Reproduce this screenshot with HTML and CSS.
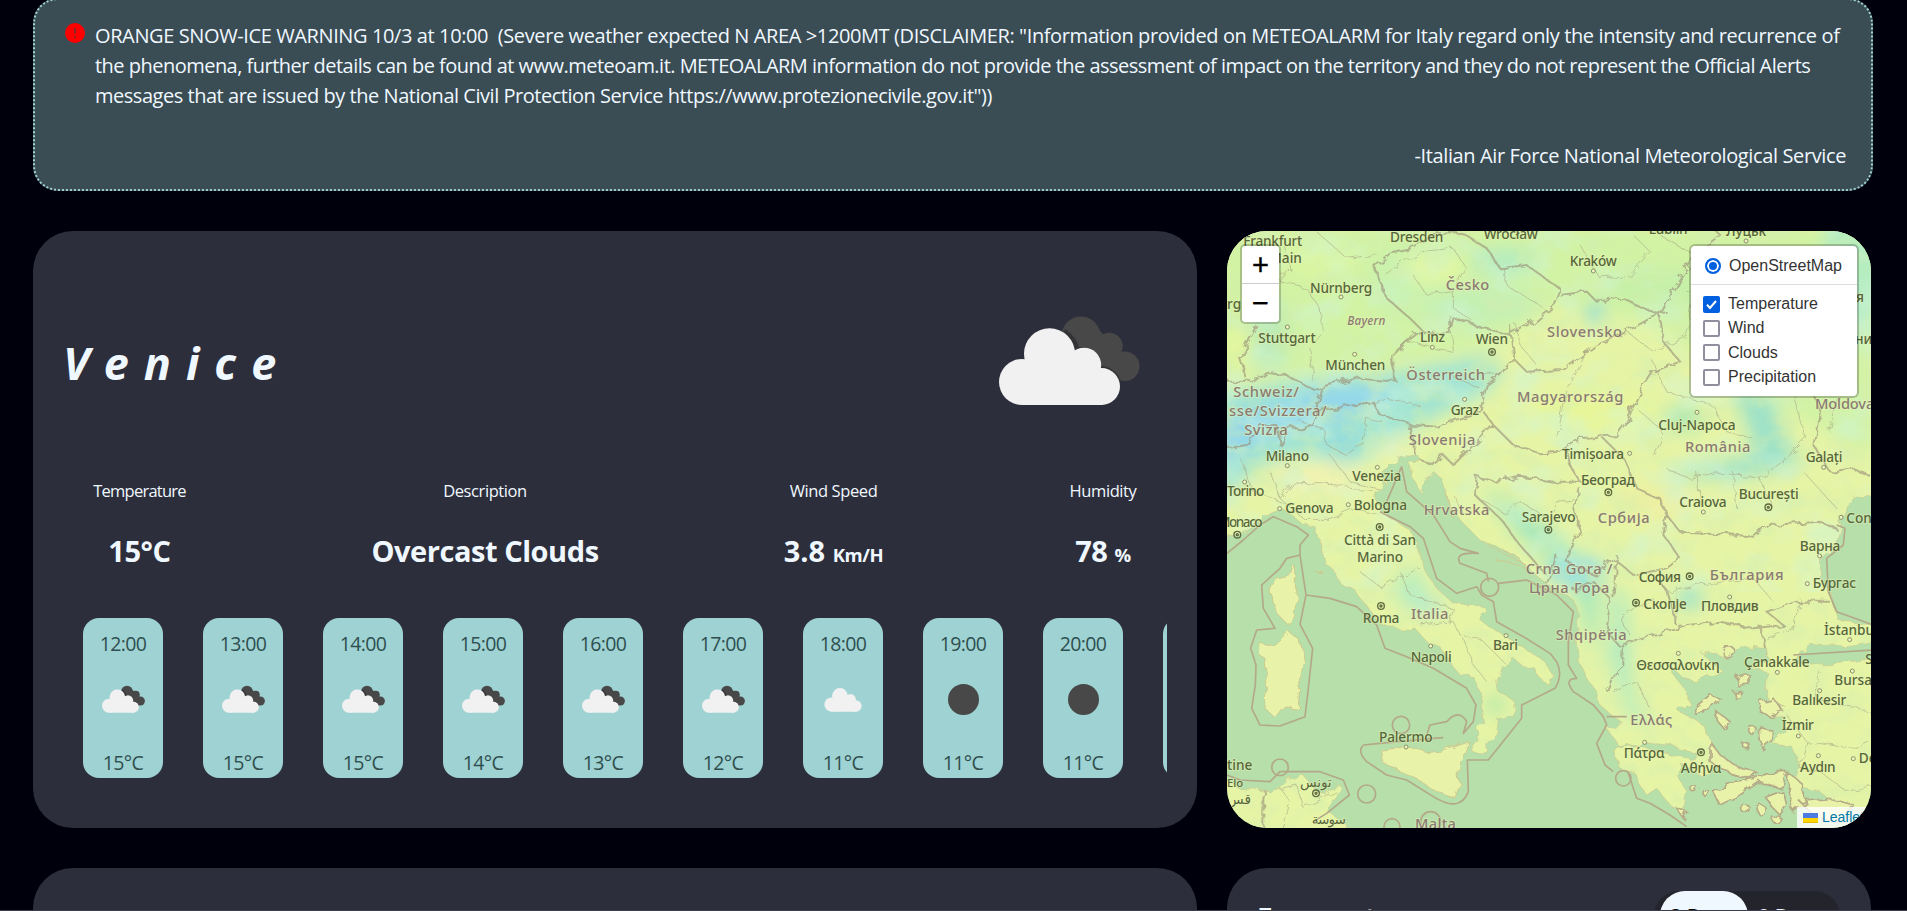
FILE: index.html
```html
<!DOCTYPE html>
<html lang="en">
<head>
<meta charset="utf-8">
<title>Weather</title>
<link rel="stylesheet" href="styles.css">
</head>
<body>
<svg class="defs" width="0" height="0" aria-hidden="true">
  <symbol id="cloud" viewBox="0 0 121 78">
    <circle cx="23" cy="54" r="23"/><circle cx="50.500" cy="25.800" r="25.500"/><circle cx="85" cy="37" r="17.200"/><circle cx="102.500" cy="58.500" r="18.500"/><path d="M23 38H50L98 40L104 60V77H23Z"/>
  </symbol>
  <symbol id="clouds" viewBox="0 0 145 95">
    <g fill="#484848"><circle cx="84" cy="22" r="19.500"/><circle cx="112.500" cy="32" r="13.200"/><circle cx="127.700" cy="52.300" r="14.800"/><path d="M80 38L102 16L124 38L128 60L118 66Z"/></g>
    <path d="M67 17Q79 26 80 36Q96 33 103 54Q117 56 121 67" fill="none" stroke="#333336" stroke-width="5"/>
    <use href="#cloud" x="2" y="14" width="121" height="78" fill="#f1f1f2"/>
  </symbol>
</svg>
<main class="page">
  <section class="alert">
    <svg class="alert-icon" viewBox="0 0 20 20"><circle cx="10" cy="10" r="10" fill="#f00"/><path d="M10 5v5.500M10 12.700v2" stroke="#7a2a2c" stroke-width="1.800"/></svg>
    <p class="alert-text"><span class="l1">ORANGE SNOW-ICE WARNING 10/3 at 10:00 &nbsp;(Severe weather expected N AREA &gt;1200MT (DISCLAIMER: "Information provided on METEOALARM for Italy regard only the intensity and recurrence of</span><span class="l2">the phenomena, further details can be found at www.meteoam.it. METEOALARM information do not provide the assessment of impact on the territory and they do not represent the Official Alerts</span><span class="l3">messages that are issued by the National Civil Protection Service https://www.protezionecivile.gov.it"))</span></p>
    <p class="alert-source">-Italian Air Force National Meteorological Service</p>
  </section>

  <section class="card weather">
    <div class="head"><h1 class="city">Venice</h1><svg class="big-icon"><use href="#clouds"/></svg></div>
    <div class="stats">
      <div class="stat s1"><span class="label">Temperature</span><b class="value">15°C</b></div>
      <div class="stat s2"><span class="label">Description</span><b class="value">Overcast Clouds</b></div>
      <div class="stat s3"><span class="label">Wind Speed</span><b class="value">3.8 <small>Km/H</small></b></div>
      <div class="stat s4"><span class="label">Humidity</span><b class="value">78 <small>%</small></b></div>
    </div>
    <div class="hours">
      <div class="hour"><span>12:00</span><svg class="ic"><use href="#clouds"/></svg><span>15°C</span></div>
      <div class="hour"><span>13:00</span><svg class="ic"><use href="#clouds"/></svg><span>15°C</span></div>
      <div class="hour"><span>14:00</span><svg class="ic"><use href="#clouds"/></svg><span>15°C</span></div>
      <div class="hour"><span>15:00</span><svg class="ic"><use href="#clouds"/></svg><span>14°C</span></div>
      <div class="hour"><span>16:00</span><svg class="ic"><use href="#clouds"/></svg><span>13°C</span></div>
      <div class="hour"><span>17:00</span><svg class="ic"><use href="#clouds"/></svg><span>12°C</span></div>
      <div class="hour"><span>18:00</span><svg class="ic one"><use href="#cloud"/></svg><span>11°C</span></div>
      <div class="hour"><span>19:00</span><svg class="ic"><circle cx="22.500" cy="14.500" r="15.500" fill="#484848"/></svg><span>11°C</span></div>
      <div class="hour"><span>20:00</span><svg class="ic"><circle cx="22.500" cy="14.500" r="15.500" fill="#484848"/></svg><span>11°C</span></div>
      <div class="hour"></div>
    </div>
  </section>

  <section class="map">
    <svg class="tiles" viewBox="21 18 1932 1791">
      <defs>
        <filter id="soft" x="-50%" y="-50%" width="200%" height="200%"><feGaussianBlur stdDeviation="26"/></filter>
        <filter id="grain" x="0" y="0" width="100%" height="100%"><feTurbulence type="fractalNoise" baseFrequency="0.012 0.015" numOctaves="4" seed="8"/><feColorMatrix values="0 0 0 0 0.66  0 0 0 0 0.86  0 0 0 0 0.42  3.2 0 0 0 -1.450"/></filter>
        <filter id="grain2" x="0" y="0" width="100%" height="100%"><feTurbulence type="fractalNoise" baseFrequency="0.007 0.009" numOctaves="3" seed="21"/><feColorMatrix values="0 0 0 0 0.62  0 0 0 0 0.92  0 0 0 0 0.76  0 3.2 0 0 -1.500"/></filter>
        <filter id="rough" x="0" y="0" width="100%" height="100%"><feTurbulence type="fractalNoise" baseFrequency="0.03" numOctaves="3" seed="3"/><feDisplacementMap in="SourceGraphic" scale="26"/></filter>
      </defs>
      <rect width="1980" height="1830" fill="#e6f4a6"/>
      <g filter="url(#soft)">
        <path d="M0 0H1960V700L1700 560L1300 300L1000 240L820 360L500 420L0 460Z" fill="#d2f3a4"/>
        <ellipse cx="760" cy="240" rx="200" ry="60" fill="#c4f0b4"/>
        <ellipse cx="560" cy="170" rx="110" ry="110" fill="#c9f2ae"/>
        <ellipse cx="850" cy="110" rx="100" ry="40" fill="#b4ecc0"/>
        <ellipse cx="640" cy="130" rx="90" ry="50" fill="#e2f7a2"/>
        <ellipse cx="300" cy="100" rx="120" ry="55" fill="#dcf6a0"/>
        <ellipse cx="60" cy="370" rx="40" ry="80" fill="#e4f79c"/>
        <ellipse cx="1900" cy="120" rx="90" ry="230" fill="#b4edc0"/>
        <ellipse cx="1330" cy="190" rx="170" ry="60" fill="#c6f0a8"/>
        <path d="M0 500L250 460L520 440L800 390L850 440L800 500L640 580L500 650L400 720L250 690L120 720L0 830Z" fill="#a2e4d2"/>
        <path d="M0 580L330 480L520 480L480 550L330 590L200 620L100 660L0 730Z" fill="#94d8ea"/>
        <path d="M300 640L400 600L420 660L360 700Z" fill="#94dcdc"/>
        <ellipse cx="150" cy="330" rx="60" ry="110" fill="#bdebb4"/>
        <path d="M1530 500L1650 510L1700 640L1740 720L1560 760L1350 755L1350 740L1600 690L1580 600Z" fill="#9fe2c8"/>
        <ellipse cx="1390" cy="580" rx="60" ry="40" fill="#b2e9b4"/>
        <ellipse cx="1125" cy="265" rx="25" ry="30" fill="#7cd8dc"/>
        <path d="M780 780L960 880L1080 1000L1140 1080L1120 1300L1060 1080L900 940Z" fill="#a9e8bc"/>
        <ellipse cx="1070" cy="1040" rx="90" ry="50" fill="#9ee2dc"/>
        <ellipse cx="1410" cy="1120" rx="40" ry="30" fill="#98e2d0"/>
        <path d="M1170 1100L1220 1100L1240 1400L1290 1500L1230 1480L1160 1300Z" fill="#b6ecc0"/>
        <ellipse cx="570" cy="1090" rx="50" ry="60" fill="#bceebe"/>
        <ellipse cx="625" cy="1145" rx="45" ry="28" fill="#b0ead4"/>
        <ellipse cx="825" cy="1440" rx="25" ry="30" fill="#a9e6ac"/>
        <ellipse cx="1300" cy="830" rx="120" ry="50" fill="#eff0a0"/>
        <ellipse cx="1120" cy="560" rx="200" ry="60" fill="#e8f69a"/>
        <ellipse cx="520" cy="670" rx="50" ry="25" fill="#f0f4b0"/>
        <ellipse cx="300" cy="760" rx="160" ry="50" fill="#f0f3b0"/>
      </g>
      <rect width="1980" height="1830" filter="url(#grain)" opacity=".48"/>
      <rect width="1980" height="1100" filter="url(#grain2)" opacity=".4"/>

      <g class="minor" filter="url(#rough)">
        <path d="M190 60L210 130L180 170L260 190L300 250L310 320L270 370L280 470M290 20L380 100L470 90M210 130L170 160M580 150L620 210L700 200L740 130L700 70L600 80L500 150M700 200L700 250L760 290M850 130L860 180L940 230L970 250M510 390L560 350L700 380L690 270M460 540L500 520L600 540M690 450L780 490M240 590L310 610L320 660L380 690L430 650L440 580L490 590M330 690L390 770L480 790M150 740L180 820L220 770L350 780L460 800M180 820L250 880L330 880L400 850L480 870M780 440L840 450M890 300L900 360L950 420M200 840L100 800L60 700"/>
        <path d="M1080 60L1140 160L1230 150L1290 80L1240 30M1320 30L1440 100L1470 180L1400 200M1420 220L1400 330L1300 380L1220 320M1110 360L1040 500L1010 640M1290 400L1340 500L1400 520L1480 540L1520 620L1600 640M1300 690L1330 620L1250 550M1340 730L1410 760L1480 740L1620 760L1700 700L1760 640M1430 740L1440 840M1540 740L1550 850M1620 760L1660 850M1760 640L1720 520L1760 450M1880 400L1830 620M1750 740L1850 850M1060 820L1010 830L980 880L900 830L860 870L780 820"/>
        <path d="M420 1040L480 1085L530 1060L600 1030M540 1040L570 1110L640 1130L700 1150M600 1200L700 1190L720 1230L780 1240L850 1310M730 1240L760 1320L800 1370M700 1150L690 1200M130 1700L230 1680L250 1750L350 1700M150 1650L210 1730L190 1810M1300 1060L1350 1100L1440 1080L1600 1060L1660 1130M1370 1080L1370 1200M1640 1240L1720 1210L1740 1120M1230 1230L1200 1180L1300 1120M1800 1340L1780 1420L1850 1440L1960 1460M1700 1470L1760 1550L1900 1570L1960 1540M1760 1550L1740 1630L1800 1640L1880 1700L1960 1680M1180 1400L1250 1370L1290 1450"/>
      </g>

      <g class="border" filter="url(#rough)">
        <path d="M720 20L800 70L840 130L920 120L960 150L1020 190L1000 240L940 290L870 330L760 300L700 280L690 320L620 330L570 280L500 220L480 170L460 120L520 80L570 70L640 30L720 20M870 300L880 400L920 440L1030 435L1130 360L1200 330L1290 280L1340 260M600 320L560 350L510 400L530 470L400 460L310 480L290 500L200 450L140 440L100 470L20 470M310 480L290 560L350 550L460 530L480 570L580 600L650 605L720 580L780 560L800 480L840 450L880 400M20 670L80 660L120 600L170 600L180 660L210 600L260 620L280 590L290 550M570 600L590 700L640 720L670 690L700 720L760 660L820 600L790 560M820 600L880 660L960 685L1020 680L1080 640L1190 630L1220 590L1260 500L1300 440L1380 410L1330 350L1320 270L1210 220L1130 230L1100 200L1020 210M1320 270L1380 160L1420 100M1040 670L1050 720L1080 770L1000 770L900 755L830 770L770 755L765 810L840 880L900 960L970 1040M1080 790L1060 850L1080 920L1050 960L1040 1010L1130 1050L1180 1000L1240 1050L1340 1030L1380 1000L1330 930L1340 870L1320 820L1250 790L1210 700L1150 640M1340 870L1380 920L1500 925L1600 935L1650 900L1800 890L1850 910M1410 100L1500 30L1480 10M1830 740L1780 660L1800 560L1760 450L1780 380M1830 740L1900 730L1950 750M80 460L60 400L110 300"/>
        <path d="M980 1080L1010 990M1060 1100L1120 1070L1170 1120L1160 1220L1200 1265L1330 1220L1400 1200L1500 1190L1600 1210L1690 1200L1640 1160L1730 1130L1830 1130M1210 1260L1210 1320L1180 1350L1160 1400M1320 1070L1340 1100L1370 1200M1180 1120L1190 990M1620 1200L1640 1290M130 1810L130 1720L150 1660"/>
      </g>

      <g class="sea" filter="url(#rough)">
        <path d="M0 940L60 925L110 895L150 862L180 850L215 870L245 895L285 905L300 950L320 1020L335 1030L365 1080L400 1090L430 1130L480 1195L540 1215L590 1215L620 1250L660 1265L695 1320L720 1350L760 1355L775 1390L785 1430L792 1490L775 1505L770 1545L752 1570L760 1583L790 1583L805 1550L830 1525L835 1485L880 1475L878 1425L835 1400L830 1370L850 1320L880 1300L910 1325L945 1330L960 1360L985 1378L995 1345L975 1310L930 1280L858 1235L800 1200L775 1180L800 1160L790 1142L740 1142L700 1135L650 1090L610 1030L600 980L575 920L530 890L480 860L465 800L500 770L480 745L530 705L560 690L595 690L600 708L570 715L570 750L605 805L620 770L640 740L665 760L690 840L720 885L780 945L880 985L930 1035L990 1085L1060 1125L1080 1175L1070 1225L1075 1310L1100 1360L1130 1400L1140 1440L1180 1475L1210 1495L1160 1510L1190 1550L1200 1570L1280 1550L1390 1570L1440 1590L1410 1600L1290 1575L1240 1555L1180 1570L1200 1630L1240 1640L1260 1680L1280 1710L1310 1690L1350 1740L1390 1760L1400 1700L1370 1650L1390 1620L1440 1650L1480 1650L1490 1590L1450 1500L1370 1455L1410 1440L1400 1400L1360 1350L1350 1320L1390 1360L1430 1370L1480 1350L1510 1340L1450 1290L1460 1275L1520 1300L1560 1265L1640 1270L1640 1300L1590 1330L1640 1340L1640 1420L1690 1440L1620 1430L1640 1470L1700 1480L1690 1520L1650 1550L1720 1570L1740 1620L1720 1680L1800 1700L1850 1740L1960 1760V1840H380L380 1800L320 1755L370 1690L350 1675L320 1710L290 1700L250 1650L200 1665L150 1700L60 1690L0 1650Z"/>
        <path d="M1980 815L1900 815L1876 840L1862 900L1850 960L1802 1000L1801 1055L1830 1100L1836 1130L1850 1180L1900 1195L1980 1200Z"/>
        <path d="M1720 1310L1770 1255L1860 1265L1960 1250V1300L1860 1315L1740 1318Z"/>
      </g>
      <g class="isle" filter="url(#rough)">
        <path d="M218 1015L228 1050L232 1130L205 1200L170 1165L150 1100L165 1060L205 1050Z"/>
        <path d="M205 1220L240 1245L252 1300L240 1370L235 1450L190 1445L165 1478L135 1450L140 1370L135 1300L118 1290L120 1255L160 1260Z"/>
        <path d="M485 1575L560 1565L620 1580L690 1570L748 1550L710 1640L720 1680L705 1718L650 1700L580 1655L490 1615Z"/>
        <path d="M285 1040H308M680 800L700 880M700 810L730 870M800 960L920 1020M820 1000L930 1030M840 970L900 1000"/>
      </g>
      <g class="isle ring" filter="url(#rough)">
        <circle cx="1525" cy="1280" r="18"/><path d="M1550 1350L1590 1350L1590 1380L1555 1385ZM1540 1400L1565 1400L1550 1425ZM1620 1430L1660 1420L1690 1460L1650 1475L1615 1455ZM1470 1410L1500 1420L1480 1445L1425 1465L1420 1450ZM1490 1460L1530 1490L1510 1510L1495 1490ZM1620 1505L1655 1515L1650 1550L1625 1570ZM1470 1550L1500 1590L1560 1630L1610 1640L1590 1660L1520 1640L1470 1610ZM1480 1700L1540 1670L1600 1660L1660 1640L1700 1640L1680 1690L1620 1670L1560 1710L1500 1740ZM1640 1720L1690 1700L1700 1740L1680 1770L1650 1740ZM1700 1640L1740 1670L1760 1730L1720 1760ZM1740 1730L1830 1720L1900 1740L1870 1790L1790 1780ZM1370 1750L1400 1760L1390 1780Z"/>
        <circle cx="1598" cy="1516" r="12"/><circle cx="1576" cy="1559" r="9"/><circle cx="1420" cy="1690" r="10"/><circle cx="1455" cy="1701" r="9"/><circle cx="1575" cy="1750" r="13"/><circle cx="1625" cy="1755" r="14"/><circle cx="1672" cy="1785" r="12"/>
      </g>
      <g class="maritime">
        <path d="M21 985L70 945L120 900L160 875L230 905L265 930L240 960L240 990L200 1000L180 1030L125 1080L130 1150L165 1210L110 1215L92 1270L108 1320L106 1380L95 1450L120 1500L180 1503L255 1475L265 1390L278 1270L240 1198L258 1110L240 990"/>
        <path d="M258 1110L330 1120L410 1145L470 1200L495 1270L560 1295L640 1330L740 1390L768 1440L760 1490L730 1525L740 1490Q720 1455 690 1480L680 1490L630 1500L620 1530M430 1560L480 1555L640 1540L670 1538M430 1560Q410 1580 440 1610L500 1650L560 1665L640 1715Q720 1765 745 1700L742 1605L805 1605L905 1480L905 1440L1005 1390Q1030 1350 1010 1310L990 1285L910 1235L830 1190L820 1130L785 1110L770 1085L710 1105L650 1060L610 940L570 905L480 860M545 725L560 800L640 870L690 950L720 970L775 985Q700 980 720 1015L800 1045L805 1070M835 1075L920 1065L1010 1110L1060 1160L1045 1250L1045 1320L1070 1360Q1030 1360 1060 1400L1120 1440L1150 1475L1160 1500L1130 1555L1155 1620L1180 1640M1225 1645L1250 1720L1290 1735L1350 1770L1400 1805M21 1650L60 1665L150 1670L180 1640L300 1640L370 1665L388 1710L320 1765L280 1790M1160 1475H1220M545 725L500 830M1850 900L1875 910L1870 960L1820 1000L1825 1100L1850 1160L1960 1200M1720 1290L1960 1275"/>
        <circle cx="543" cy="1500" r="26"/><circle cx="440" cy="1707" r="27"/><circle cx="180" cy="1627" r="25"/><circle cx="516" cy="1805" r="24"/><circle cx="632" cy="1790" r="30"/><circle cx="809" cy="1087" r="27"/><circle cx="1210" cy="1660" r="23"/>
      </g>

      <g class="dots">
        <circle cx="363" cy="216" r="6"/><circle cx="202" cy="306" r="6"/><circle cx="404" cy="388" r="6"/><circle cx="637" cy="367" r="6"/><circle cx="734" cy="523" r="6"/><circle cx="202" cy="722" r="6"/><circle cx="472" cy="727" r="6"/><circle cx="74" cy="771" r="6"/><circle cx="179" cy="851" r="6"/><circle cx="385" cy="839" r="6"/><circle cx="1120" cy="138" r="6"/><circle cx="1578" cy="48" r="6"/><circle cx="1431" cy="562" r="6"/><circle cx="1229" cy="685" r="6"/><circle cx="1450" cy="861" r="6"/><circle cx="1811" cy="727" r="6"/><circle cx="1863" cy="877" r="6"/><circle cx="632" cy="1263" r="6"/><circle cx="858" cy="1232" r="6"/><circle cx="558" cy="1566" r="6"/><circle cx="1799" cy="993" r="6"/><circle cx="1762" cy="1076" r="6"/><circle cx="1529" cy="1116" r="6"/><circle cx="1375" cy="1285" r="6"/><circle cx="1672" cy="1342" r="6"/><circle cx="1889" cy="1244" r="6"/><circle cx="1897" cy="1338" r="6"/><circle cx="1799" cy="1397" r="6"/><circle cx="1735" cy="1533" r="6"/><circle cx="1795" cy="1592" r="6"/><circle cx="1900" cy="1601" r="6"/><circle cx="1274" cy="1552" r="6"/>
      </g>
      <g class="capitals">
        <g id="cap"><circle cx="816" cy="381" r="10"/><circle cx="816" cy="381" r="3"/></g>
        <use href="#cap" x="-337" y="525"/><use href="#cap" x="169" y="533"/><use href="#cap" x="349" y="421"/><use href="#cap" x="829" y="466"/><use href="#cap" x="-764" y="548"/><use href="#cap" x="-333" y="762"/><use href="#cap" x="593" y="673"/><use href="#cap" x="432" y="752"/><use href="#cap" x="627" y="1201"/><use href="#cap" x="-528" y="1324"/>
      </g>

      <g class="cities">
        <text x="70" y="64" textLength="177">Frankfurt</text><text x="148" y="115">Main</text><text x="510" y="51" textLength="160">Dresden</text><text x="791" y="41" textLength="162">Wrocław</text>
        <text x="270" y="203" textLength="187">Nürnberg</text><text x="115" y="353" textLength="172">Stuttgart</text><text x="316" y="435" textLength="180">München</text><text x="600" y="352" textLength="75">Linz</text><text x="767" y="357" textLength="97">Wien</text><text x="692" y="570" textLength="85">Graz</text>
        <text x="137" y="707" textLength="130">Milano</text><text x="397" y="769" textLength="147">Venezia</text><text x="21" y="814" textLength="112">Torino</text><text x="196" y="865" textLength="145">Genova</text><text x="401" y="854" textLength="160">Bologna</text><text x="-6" y="906" textLength="134">Monaco</text><text x="-30" y="252">burg</text>
        <text x="905" y="892" textLength="162">Sarajevo</text><text x="1049" y="122" textLength="141">Kraków</text><text x="1286" y="26" textLength="117">Lublin</text><text x="1518" y="34" textLength="120">Луцьк</text><text x="1315" y="616" textLength="232">Cluj-Napoca</text><text x="1026" y="702" textLength="186">Timișoara</text><text x="1083" y="779" textLength="162">Београд</text><text x="1378" y="845" textLength="142">Craiova</text><text x="1556" y="823" textLength="180">București</text><text x="1757" y="710" textLength="110">Galați</text><text x="1879" y="894">Constanța</text><text x="1908" y="230">я</text><text x="1905" y="356">ниця</text>
        <text x="372" y="960" textLength="216">Città di San</text><text x="411" y="1011" textLength="138">Marino</text><text x="428" y="1195" textLength="110">Roma</text><text x="572" y="1311" textLength="123">Napoli</text><text x="819" y="1275" textLength="75">Bari</text><text x="477" y="1551" textLength="161">Palermo</text><text x="21" y="1635">tine</text><text x="21" y="1686" font-size="34">Elo</text><text x="240" y="1686" textLength="95">تونس</text><text x="275" y="1796" textLength="103">سوسة</text><text x="21" y="1738">قس</text>
        <text x="1256" y="1070" textLength="127">София</text><text x="1270" y="1151" textLength="130">Скопје</text><text x="1443" y="1159" textLength="173">Пловдив</text><text x="1739" y="977" textLength="122">Варна</text><text x="1778" y="1090" textLength="130">Бургас</text><text x="1812" y="1230">İstanbul</text><text x="1249" y="1335" textLength="250">Θεσσαλονίκη</text><text x="1572" y="1325" textLength="197">Çanakkale</text><text x="1843" y="1381">Bursa</text><text x="1936" y="1317">S</text><text x="1717" y="1440" textLength="162">Balıkesir</text><text x="1685" y="1516" textLength="96">İzmir</text><text x="1740" y="1640" textLength="107">Aydın</text><text x="1916" y="1614">Denizli</text><text x="1211" y="1599" textLength="123">Πάτρα</text><text x="1382" y="1645" textLength="122">Αθήνα</text>
      </g>
      <g class="countries">
        <text x="677" y="194" textLength="131">Česko</text><text x="382" y="299" textLength="114" font-size="35" font-style="italic">Bayern</text><text x="559" y="466" textLength="236">Österreich</text><text x="40" y="516" textLength="197">Schweiz/</text><text x="27" y="572" textLength="293">sse/Svizzera/</text><text x="73" y="629" textLength="130">Svizra</text><text x="566" y="660" textLength="200">Slovenija</text><text x="611" y="869" textLength="197">Hrvatska</text><text x="891" y="530" textLength="319">Magyarország</text><text x="981" y="337" textLength="225">Slovensko</text><text x="1785" y="553" textLength="178">Moldova</text><text x="1395" y="680" textLength="196">România</text><text x="1133" y="895" textLength="156">Србија</text>
        <text x="573" y="1181" textLength="112">Italia</text><text x="917" y="1048" textLength="260">Crna Gora /</text><text x="927" y="1104" textLength="241">Црна Гора</text><text x="1007" y="1246" textLength="213">Shqipëria</text><text x="1469" y="1065" textLength="222">България</text><text x="1231" y="1500" textLength="126">Ελλάς</text><text x="585" y="1812" textLength="123">Malta</text>
      </g>
    </svg>
    <div class="zoom"><span>+</span><span>−</span></div>
    <div class="layers">
      <div class="row base"><i class="radio"></i>OpenStreetMap</div>
      <div class="overlays">
        <div class="row"><svg class="box on" viewBox="0 0 17 17"><path d="M4 8.800l3 3.200 6-7" fill="none" stroke="#fff" stroke-width="2"/></svg>Temperature</div>
        <div class="row"><i class="box"></i>Wind</div>
        <div class="row"><i class="box"></i>Clouds</div>
        <div class="row"><i class="box"></i>Precipitation</div>
      </div>
    </div>
    <div class="attribution"><svg width="15" height="10"><path fill="#4c7be1" d="M0 0h15v5H0z"/><path fill="#ffd500" d="M0 5h15v4H0z"/><path fill="#e0bc00" d="M0 9h15v1H0z"/></svg>Leaflet</div>
  </section>

  <section class="card cut"></section>
  <section class="card cut forecast"><h2>Forecast</h2><div class="toggle"><span class="active">3 Days</span><span>8 Days</span></div></section>
</main>
</body>
</html>
```
FILE: styles.css
```css
* { box-sizing: border-box; }
html, body { height: 100%; }
html { overflow: hidden; }
body {
  margin: 0;
  height: 911px;
  overflow: hidden;
  background: #00000d;
  color: #f0f8ff;
  font-family: "Open Sans", "Noto Sans", sans-serif;
}
.defs { position: absolute; }
h1, h2, p { margin: 0; }
.page {
  height: 913px;
  padding: 0 36px 0 33px;
  margin-top: -2px;
  display: grid;
  grid-template-columns: 1164px 644px;
  grid-template-rows: 193px 597px 43px;
  column-gap: 30px;
  row-gap: 40px;
  border-bottom: 1px solid #3d3e4a;
}
.alert {
  grid-column: 1 / 3;
  width: 1840px;
  border: 2px dotted #9fd3d4;
  border-radius: 25px;
  background: #3a4c54;
  padding: 21px 20px 0 30px;
  display: grid;
  grid-template-columns: 30px 1fr;
  align-content: start;
  font-size: 20px;
  line-height: 30px;
}
.alert-icon { width: 20px; height: 20px; margin-top: 2px; }
.alert-text span { display: block; white-space: nowrap; }
.l1 { letter-spacing: -0.39px; }
.l2 { letter-spacing: -0.52px; }
.l3 { letter-spacing: -0.47px; }
.alert-source { grid-column: 1 / 3; text-align: right; margin-top: 30px; padding-right: 5px; letter-spacing: -0.38px; margin-bottom: 0; }
.card { background: #2d2e3b; border-radius: 40px; }
.cut { border-radius: 40px 40px 0 0; height: 42px; overflow: hidden; }
.weather { padding: 0 30px; }
.head { height: 247px; padding: 13px 25px 0 0; display: flex; align-items: center; justify-content: space-between; }
.city { font-family: "Noto Sans", sans-serif; font-size: 45px; font-weight: 700; font-style: italic; letter-spacing: 15px; line-height: 60px; padding-top: 4px; }
.big-icon { width: 145px; height: 95px; }
.stats { display: flex; justify-content: space-between; padding: 0 30px; height: 140px; }
.stat { display: flex; flex-direction: column; align-items: center; white-space: nowrap; }
.s1 { width: 93px; }
.s2 { width: 226px; }
.s3 { width: 99px; }
.s4 { width: 68px; }
.label { font-size: 16.5px; line-height: 26px; letter-spacing: -0.4px; }
.s1 .label { letter-spacing: -0.75px; }
.value { font-size: 29px; line-height: 40px; margin-top: 27px; letter-spacing: -0.45px; }
.value small { font-size: 18.5px; letter-spacing: -0.4px; }
.s3 .value { letter-spacing: 0; }
.hours { display: flex; gap: 40px; margin-left: 20px; width: 1084px; overflow: hidden; }
.hour {
  flex: 0 0 80px;
  height: 160px;
  border-radius: 16px;
  background: #9fd3d3;
  color: #2f4f4f;
  font-size: 19.5px;
  line-height: 26px;
  letter-spacing: -0.6px;
  padding-top: 13px;
  display: flex;
  flex-direction: column;
  align-items: center;
}
.ic { flex: none; width: 45px; height: 29px; margin: 28px 0 36px; overflow: visible; }
.ic.one { width: 38px; height: 24px; margin: 31px 0 38px; fill: #f1f1f2; }
.map { position: relative; border-radius: 40px; overflow: hidden; background: #b7dfaa; font-family: "Liberation Sans", Arial, sans-serif; }
.tiles { display: block; width: 644px; height: 597px; font-family: "Noto Sans", "DejaVu Sans", sans-serif; }
.minor { fill: none; stroke: #a3a083; stroke-width: 3; opacity: .55; }
.border { fill: none; stroke: #9d957b; stroke-width: 6; opacity: .65; }
.sea { fill: #b7dfaa; stroke: #cdc98f; stroke-width: 2; }
.isle { fill: #e8f2a8; stroke: #cdc98f; stroke-width: 3; }
.ring { stroke: #b5aa88; stroke-width: 5; }
.maritime { fill: none; stroke: #b3a989; stroke-width: 5; stroke-linejoin: round; }
.dots { fill: #f0f5c0; stroke: #76805a; stroke-width: 2.5; }
.capitals { fill: none; stroke: #5f6a42; stroke-width: 4; }
.cities, .countries { paint-order: stroke; stroke: #eaf5b4; stroke-opacity: .5; stroke-width: 5; stroke-linejoin: round; font-weight: 500; }
.cities { font-size: 41px; fill: #56663c; }
.countries { font-size: 44px; fill: #8a7a74; }
.zoom {
  position: absolute; left: 13px; top: 13px; width: 41px; height: 80px;
  border: 2px solid rgba(0,0,0,.2); border-radius: 5px; background: #fff; background-clip: padding-box;
  color: #000; font: 29px/38px "Liberation Sans", sans-serif; text-align: center; -webkit-text-stroke: .4px #000;
  display: flex; flex-direction: column;
}
.zoom span { height: 38px; }
.zoom span:first-child { border-bottom: 1px solid #ccc; }
.layers {
  position: absolute; right: 12px; top: 13px; width: 170px; height: 154px;
  border: 2px solid rgba(0,0,0,.22); border-radius: 6px; background: #fff; background-clip: padding-box;
  color: #333; font-size: 16px;
}
.row { display: flex; align-items: center; height: 24.3px; padding-left: 12px; gap: 8px; }
.base { height: 39px; border-bottom: 1px solid #ddd; padding: 2px 0 0 14px; gap: 8px; }
.overlays { padding-top: 7px; }
.radio { width: 16px; height: 16px; border: 2px solid #0060df; border-radius: 50%; background: #0060df; box-shadow: inset 0 0 0 2px #fff; }
.box { width: 17px; height: 17px; border: 2px solid #8f8f9d; border-radius: 2px; }
.box.on { background: #0060df; border: 0; }
.attribution {
  position: absolute; right: 0; bottom: 0; width: 74px; height: 21px; padding-left: 6px;
  background: rgba(255,255,255,.8); color: #0078a8; font-size: 14px; line-height: 21px;
  display: flex; align-items: center; gap: 4px; overflow: hidden;
}
.forecast { display: flex; justify-content: space-between; padding: 23px 31px 0 30px; }
.forecast h2 { font-size: 28px; line-height: 40px; margin-top: 7px; white-space: nowrap; }
.toggle { display: flex; flex: none; width: 186px; height: 50px; border-radius: 25px; background: #24242d; padding-left: 6px; font-size: 20px; line-height: 50px; }
.toggle span { width: 88px; padding-left: 10px; font-weight: 600; }
.toggle .active { background: #f0f8ff; color: #000; border-radius: 25px; }
```
